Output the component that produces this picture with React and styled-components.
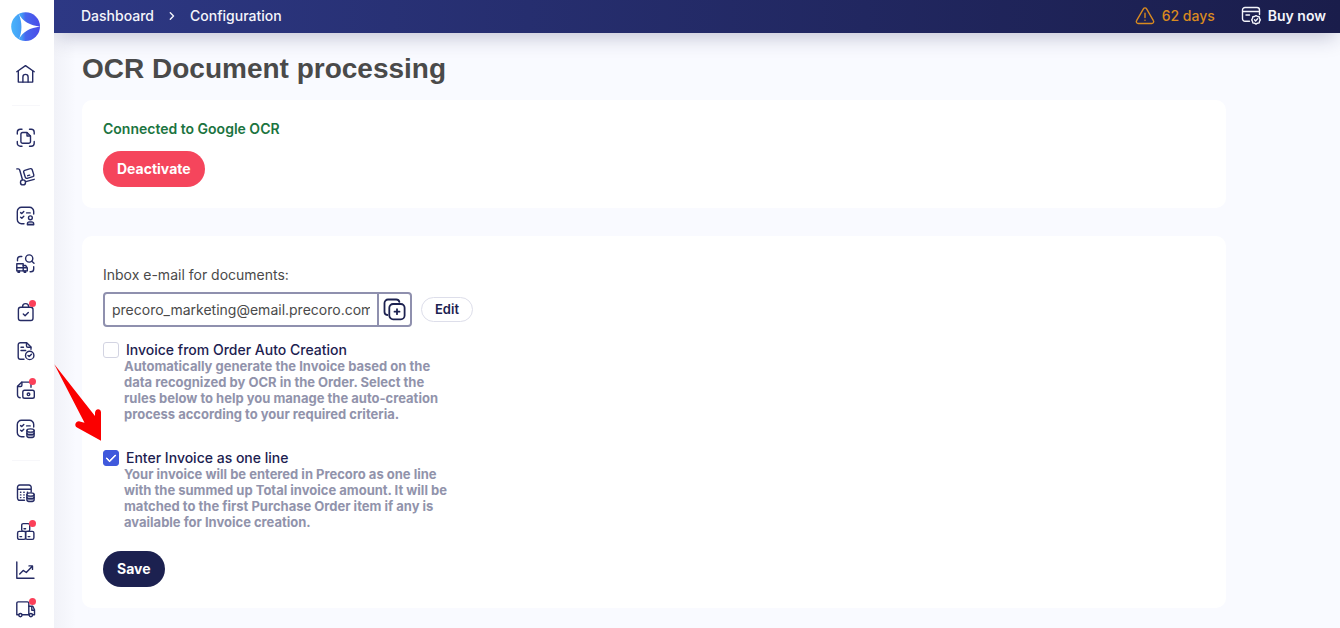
import { useState } from "react";
import styled, { createGlobalStyle } from "styled-components";

const GlobalStyle = createGlobalStyle`
  * {
    box-sizing: border-box;
  }
  body {
    margin: 0;
    background: #f9faff;
    font-family: Inter, "Liberation Sans", sans-serif;
    color: #1c2150;
  }
  button,
  input {
    font-family: inherit;
  }
`;

const Icon = ({ children, size = 20 }) => (
  <svg
    width={size}
    height={size}
    viewBox={`0 0 ${size} ${size}`}
    fill="none"
    stroke="currentColor"
    strokeWidth="1.4"
    strokeLinecap="round"
    strokeLinejoin="round"
    aria-hidden="true"
  >
    {children}
  </svg>
);

const Logo = () => (
  <svg width="30" height="30" viewBox="0 0 30 30" aria-hidden="true">
    <defs>
      <linearGradient id="logo" x1="0" y1="0" x2="1" y2="0">
        <stop offset="0" stopColor="#49b4fb" />
        <stop offset="0.35" stopColor="#439df6" />
        <stop offset="0.5" stopColor="#4767ee" />
        <stop offset="1" stopColor="#4a4be8" />
      </linearGradient>
    </defs>
    <circle cx="14.6" cy="14.6" r="14.4" fill="url(#logo)" />
    <path d="M7.6 1.4C12 10 19 13 29.2 14.6C19 16 12 19.5 7.6 27.8C11.4 20 11.4 10 7.6 1.4Z" fill="#fff" />
  </svg>
);

const HomeIcon = () => (
  <Icon>
    <path d="M.8 7.7 9.5 1.6l8.7 6.1" />
    <path d="M2.3 7.2v10.9h14.4V7.2" />
    <path d="M6.9 18v-5a2.6 2.6 0 0 1 5.2 0v5" />
  </Icon>
);

const ScanIcon = () => (
  <Icon>
    <path d="M1.3 6V4.3a3 3 0 0 1 3-3H6M13.5 1.3h1.7a3 3 0 0 1 3 3V6M18.2 13.5v1.7a3 3 0 0 1-3 3h-1.7M6 18.2H4.3a3 3 0 0 1-3-3v-1.7" />
    <path d="M11 4.5H6.7a1.8 1.8 0 0 0-1.8 1.8v7.2a1.8 1.8 0 0 0 1.8 1.8h6a1.8 1.8 0 0 0 1.8-1.8V8L11 4.5Z" />
    <path d="M11 4.7V8h3.3" />
  </Icon>
);

const TrolleyIcon = () => (
  <Icon>
    <path d="M.8 1.9h1.5a1.5 1.5 0 0 1 1.4 1.1l2.8 9.7" />
    <circle cx="7" cy="15.4" r="2.5" />
    <path d="m9.8 14.7 8.4-2.4" />
    <path d="m8.7 3.3 5.6-1.6a1.5 1.5 0 0 1 1.9 1l1.6 5.2a1.5 1.5 0 0 1-1 1.8l-5.6 1.6a1.5 1.5 0 0 1-1.9-1L7.7 5.2a1.5 1.5 0 0 1 1-1.9Z" />
    <path d="m11.7 8.7 2-.6" />
  </Icon>
);

const TaskFrame = () => (
  <>
    <path d="M8 17.7H5.5a4.2 4.2 0 0 1-4.2-4.2v-8a4.2 4.2 0 0 1 4.2-4.2h8a4.2 4.2 0 0 1 4.2 4.2V8" />
    <path d="m4.6 6.6 1.2 1 2-2M4.6 11.3l1.2 1 2-2M10.6 6.9h3.6" />
  </>
);

const TaskUserIcon = () => (
  <Icon>
    <TaskFrame />
    <circle cx="14.4" cy="11.8" r="1.9" />
    <path d="M11.4 18.7v-.8a2 2 0 0 1 2-2h2.3a2 2 0 0 1 2 2v.8Z" fill="#b9bbd0" />
  </Icon>
);

const Stack = () => (
  <g>
    <path d="M10.9 11.5v5.4c0 1 1.6 1.7 3.6 1.7s3.6-.7 3.6-1.7v-5.4" fill="#b9bbd0" />
    <ellipse cx="14.5" cy="11.5" rx="3.6" ry="1.6" fill="#fff" />
    <path d="M10.9 14.2c0 1 1.6 1.6 3.6 1.6s3.6-.6 3.6-1.6" />
  </g>
);

const TaskStackIcon = () => (
  <Icon>
    <TaskFrame />
    <Stack />
  </Icon>
);

const TruckSearchIcon = () => (
  <Icon>
    <circle cx="13.2" cy="4.5" r="3.6" />
    <path d="m15.8 7.2 2.2 2" />
    <path d="M1.5 6.7V5.3a2.8 2.8 0 0 1 2.8-2.8h1.5" />
    <path d="M17.7 12.7v2.2a2.8 2.8 0 0 1-2.8 2.8h-.8" />
    <path d="M.8 16.9V9.8h6.4v7.1Z" />
    <path d="M7.2 11.5h2.4l1.7 2.3v3.1H7.2M.8 13.8h10.4" />
    <path d="M2 17v1.2h1.5V17M8.2 17v1.2h1.5V17" />
  </Icon>
);

const BagIcon = () => (
  <Icon>
    <rect x="2.4" y="5.2" width="14.6" height="13.3" rx="2.2" />
    <path d="M6.6 5.2v-.6a3 3 0 0 1 6 0v.6" />
    <path d="m7.3 12 1.8 1.7 3.2-3.3" />
  </Icon>
);

const DocCheckIcon = () => (
  <Icon>
    <path d="M8 18.2H4.4a2.2 2.2 0 0 1-2.2-2.2V3.9a2.2 2.2 0 0 1 2.2-2.2h6.3l4.3 4.2v2.3" />
    <path d="M10.5 2v3a1.3 1.3 0 0 0 1.3 1.3h3" />
    <path d="M5 6.3h2.5M5 9.5h4.7" />
    <circle cx="13.7" cy="14.4" r="4.2" />
    <path d="m12 14.4 1.2 1.2 2.3-2.3" />
  </Icon>
);

const DocMoneyIcon = () => (
  <Icon>
    <path d="M4.2 17.7a2.7 2.7 0 0 1-2.7-2.7V6.3l4.4-4.2h6.9a2.2 2.2 0 0 1 2.2 2.2v3" />
    <path d="M5.9 2.3v2.9a1.3 1.3 0 0 1-1.3 1.3H1.7" />
    <rect x="6.8" y="10.3" width="11.5" height="8" rx="1.8" />
    <circle cx="12.5" cy="14.3" r="1.3" />
  </Icon>
);

const CalculatorIcon = () => (
  <Icon>
    <path d="M8.5 17.3H3.7a2.2 2.2 0 0 1-2.2-2.2V4.2A2.2 2.2 0 0 1 3.7 2h9.3a2.2 2.2 0 0 1 2.2 2.2V9M1.5 6.3h13.7" />
    <path d="M4.5 9.2h.4M7.8 9.2h.4M11.3 9.2h.4M4.5 11.9h.4M7.8 11.9h.4M4.5 14.6h.4M7.8 14.6h.4" />
    <Stack />
  </Icon>
);

const BoxesIcon = () => (
  <Icon>
    <rect x="5.7" y="1.6" width="8" height="7.8" rx="1.6" />
    <rect x="1.6" y="9.4" width="8" height="8" rx="1.6" />
    <rect x="9.6" y="9.4" width="8.3" height="8" rx="1.6" />
    <path d="M8 6.8h1.6M4 14.6h1.6M12.2 14.6h1.6" />
  </Icon>
);

const ChartIcon = () => (
  <Icon>
    <path d="M.8 1v16.2h17.2" />
    <path d="m3.7 12.9 3.5-3.5 3.1 2.1 6-6.3M13 4.9h3.5v3.5" />
  </Icon>
);

const TruckIcon = () => (
  <Icon>
    <path d="M2.6 14.8H.8V3.2a1.3 1.3 0 0 1 1.3-1.3h9.4a1.3 1.3 0 0 1 1.3 1.3v11.6H6.2" />
    <path d="M12.8 6.3h4l1.7 3.4v5.1h-1.8M12.8 14.8h.4" />
    <path d="M18.3 10.3h-2.5V6.6" />
    <circle cx="4.4" cy="15.1" r="1.6" />
    <circle cx="14.9" cy="15.1" r="1.6" />
  </Icon>
);

const WarningIcon = () => (
  <Icon>
    <path d="M8.4 2.8 1.6 14.6a1.9 1.9 0 0 0 1.6 2.9h13.6a1.9 1.9 0 0 0 1.6-2.9L11.6 2.8a1.9 1.9 0 0 0-3.2 0Z" />
    <path d="M10 7.2v4.3M10 14.1v.2" />
  </Icon>
);

const CardIcon = () => (
  <Icon>
    <path d="M8.5 15.3H4A2.5 2.5 0 0 1 1.5 12.8V4A2.5 2.5 0 0 1 4 1.5h12A2.5 2.5 0 0 1 18.5 4v4.5M1.5 5.5h17M5 9h3.5" />
    <path d="m15 9.6 1.5.9 1.7.3.3 1.6.8 1.4-.8 1.5-.3 1.6-1.7.3-1.5.9-1.5-.9-1.7-.3-.3-1.6-.8-1.5.8-1.4.3-1.6 1.7-.3Z" />
    <path d="m13.5 13.8 1.1 1.1 2-2.1" />
  </Icon>
);

const ChevronIcon = () => (
  <Icon size={8}>
    <path d="m2.3.8 3.2 3.2-3.2 3.2" />
  </Icon>
);

const CopyIcon = () => (
  <svg
    width="24"
    height="24"
    viewBox="0 0 24 24"
    fill="none"
    stroke="currentColor"
    strokeWidth="1.8"
    strokeLinecap="round"
    strokeLinejoin="round"
    aria-hidden="true"
  >
    <path d="M4.3 17A3 3 0 0 1 1.5 14V5A3.5 3.5 0 0 1 5 1.5h8.3a3.2 3.2 0 0 1 3.1 2.4" />
    <rect x="6.3" y="6" width="15.3" height="15.3" rx="3.8" />
    <path d="M14 11.2v5M11.5 13.7h5" />
  </svg>
);

const menu = [
  [
    { name: "Document scan", icon: ScanIcon },
    { name: "Purchasing", icon: TrolleyIcon },
    { name: "Requests", icon: TaskUserIcon },
  ],
  [{ name: "Suppliers", icon: TruckSearchIcon }],
  [
    { name: "Orders", icon: BagIcon, alert: true },
    { name: "Receipts", icon: DocCheckIcon },
    { name: "Invoices", icon: DocMoneyIcon, alert: true },
    { name: "Expenses", icon: TaskStackIcon },
  ],
];

const tools = [
  { name: "Budgets", icon: CalculatorIcon },
  { name: "Inventory", icon: BoxesIcon, alert: true },
  { name: "Reports", icon: ChartIcon },
  { name: "Delivery", icon: TruckIcon, alert: true },
];

const MenuItem = ({ item }) => (
  <MenuLink href="#" aria-label={item.name}>
    <item.icon />
    {item.alert && <Dot />}
  </MenuLink>
);

const Option = ({ id, title, checked, onChange, children }) => (
  <OptionBox>
    <OptionHead>
      <Checkbox id={id} type="checkbox" checked={checked} onChange={onChange} />
      <OptionLabel htmlFor={id}>{title}</OptionLabel>
    </OptionHead>
    <Description>{children}</Description>
    {checked && (
      <Pointer width="48" height="78" viewBox="0 0 48 78" aria-hidden="true">
        <path
          d="M.3.3 41 52V49c0-5 6-5 6-.5V76.7L23 63.6c-3.5-2-1-7.2 2.7-6.2l4.8 1.3Z"
          fill="#fb0000"
        />
      </Pointer>
    )}
  </OptionBox>
);

export default function App() {
  const [email, setEmail] = useState("precoro_marketing@email.precoro.com");
  const [auto, setAuto] = useState(false);
  const [oneLine, setOneLine] = useState(true);

  return (
    <Page>
      <GlobalStyle />
      <Sidebar>
        <LogoLink href="#" aria-label="Home page">
          <Logo />
        </LogoLink>
        <MenuItem item={{ name: "Home", icon: HomeIcon }} />
        <Divider />
        <Menu>
          {menu.map((group) => (
            <MenuGroup key={group[0].name}>
              {group.map((item) => (
                <MenuItem key={item.name} item={item} />
              ))}
            </MenuGroup>
          ))}
        </Menu>
        <Divider />
        <MenuGroup>
          {tools.map((item) => (
            <MenuItem key={item.name} item={item} />
          ))}
        </MenuGroup>
      </Sidebar>

      <Main>
        <Header>
          <Breadcrumbs>
            <HeaderLink href="#">Dashboard</HeaderLink>
            <ChevronIcon />
            <HeaderLink href="#">Configuration</HeaderLink>
          </Breadcrumbs>
          <HeaderActions>
            <Trial>
              <WarningIcon />
              62 days
            </Trial>
            <BuyLink href="#">
              <CardIcon />
              Buy now
            </BuyLink>
          </HeaderActions>
        </Header>

        <Content>
          <Title>OCR Document processing</Title>
          <Card>
            <Status>Connected to Google OCR</Status>
            <Button $color="#f5455c">Deactivate</Button>
          </Card>
          <Card>
            <FieldLabel htmlFor="inbox">Inbox e-mail for documents:</FieldLabel>
            <FieldRow>
              <InputGroup>
                <Input id="inbox" value={email} onChange={(e) => setEmail(e.target.value)} />
                <CopyButton aria-label="Copy e-mail">
                  <CopyIcon />
                </CopyButton>
              </InputGroup>
              <EditButton>Edit</EditButton>
            </FieldRow>
            <Options>
              <Option
                id="auto"
                title="Invoice from Order Auto Creation"
                checked={auto}
                onChange={() => setAuto(!auto)}
              >
                Automatically generate the Invoice based on the data recognized by OCR in the Order.
                Select the rules below to help you manage the auto-creation process according to
                your required criteria.
              </Option>
              <Option
                id="one-line"
                title="Enter Invoice as one line"
                checked={oneLine}
                onChange={() => setOneLine(!oneLine)}
              >
                Your invoice will be entered in Precoro as one line with the summed up Total invoice
                amount. It will be matched to the first Purchase Order item if any is available for
                Invoice creation.
              </Option>
            </Options>
            <Button $color="#1c2150">Save</Button>
          </Card>
        </Content>
      </Main>
    </Page>
  );
}

const Page = styled.div`
  display: flex;
  height: 100vh;
  overflow: hidden;
`;

const Sidebar = styled.nav`
  flex: 0 0 54px;
  display: flex;
  flex-direction: column;
  align-items: center;
  padding-right: 2px;
  overflow: hidden;
  background: #fff;
`;

const LogoLink = styled.a`
  display: flex;
  padding: 12px 0;
`;

const Menu = styled.div`
  display: flex;
  flex-direction: column;
  gap: 9px;
`;

const MenuGroup = styled.div`
  display: flex;
  flex-direction: column;
`;

const MenuLink = styled.a`
  position: relative;
  display: flex;
  padding: 10px 0 9px;
  color: #252b64;
`;

const Dot = styled.span`
  position: absolute;
  top: 8px;
  right: 0;
  width: 7px;
  height: 7px;
  border-radius: 50%;
  background: #fb4059;
`;

const Divider = styled.div`
  flex: none;
  width: 28px;
  height: 1px;
  margin: 12px 0;
  background: #f7f7fa;
`;

const Main = styled.div`
  flex: 1;
  min-width: 0;
  overflow: auto;
  background: linear-gradient(90deg, #f1f2f8, #f9faff 22px);
`;

const Header = styled.header`
  display: flex;
  align-items: center;
  justify-content: space-between;
  height: 33px;
  padding: 0 14px 2px 27px;
  background: linear-gradient(90deg, #2d3884, #1a1d4b);
  box-shadow: 0 8px 20px -4px rgba(28, 33, 80, 0.25);
  color: #f4f5fb;
  font-size: 14px;
  font-weight: 500;
  line-height: 20px;
`;

const Breadcrumbs = styled.div`
  display: flex;
  align-items: center;
  gap: 14px;
`;

const HeaderLink = styled.a`
  color: inherit;
  text-decoration: none;
`;

const HeaderActions = styled.div`
  display: flex;
  align-items: center;
  gap: 26px;
`;

const Trial = styled.span`
  display: flex;
  align-items: center;
  gap: 7px;
  color: #d98a1f;
`;

const BuyLink = styled(HeaderLink)`
  display: flex;
  align-items: center;
  gap: 7px;
  font-weight: 600;
`;

const Content = styled.main`
  display: flex;
  flex-direction: column;
  gap: 28px;
  max-width: 1200px;
  padding: 20px 28px;
`;

const Title = styled.h1`
  margin: 0 0 -13px;
  color: #4a4a4a;
  font-family: "Liberation Sans", Arial, sans-serif;
  font-size: 28px;
  font-weight: 700;
  line-height: 32px;
`;

const Card = styled.section`
  padding: 21px;
  border-radius: 10px;
  background: #fff;
`;

const Status = styled.p`
  margin: 0 0 14px;
  color: #1b7440;
  font-size: 14px;
  font-weight: 600;
  line-height: 16px;
`;

const Button = styled.button`
  height: 36px;
  padding: 0 14px 1px;
  border: 0;
  border-radius: 18px;
  background: ${(props) => props.$color};
  color: #fff;
  font-size: 14px;
  font-weight: 700;
`;

const FieldLabel = styled.label`
  display: block;
  margin: 8px 0 7px;
  color: #4a4a4a;
  font-size: 14px;
  line-height: 20px;
`;

const FieldRow = styled.div`
  display: flex;
  align-items: center;
  gap: 9px;
`;

const InputGroup = styled.div`
  display: flex;
  width: 309px;
  height: 35px;
  border: 2px solid #8f90ae;
  border-radius: 4px;
`;

const Input = styled.input`
  flex: 1;
  min-width: 0;
  padding: 0 7px;
  border: 0;
  outline: 0;
  background: none;
  color: #4a4a4a;
  font-size: 14px;
`;

const CopyButton = styled.button`
  display: flex;
  align-items: center;
  justify-content: center;
  width: 33px;
  padding: 0;
  border: 0;
  border-left: 2px solid #8f90ae;
  background: none;
  color: #1c2150;
`;

const EditButton = styled.button`
  height: 25px;
  padding: 0 13px 1px;
  border: 1px solid #dddeea;
  border-radius: 13px;
  background: #fff;
  color: #1c2150;
  font-size: 13px;
  font-weight: 600;
`;

const Options = styled.div`
  display: flex;
  flex-direction: column;
  gap: 28px;
  margin: 15px 0 21px;
`;

const OptionBox = styled.div`
  position: relative;
`;

const OptionHead = styled.div`
  display: flex;
  align-items: center;
  gap: 7px;
`;

const Checkbox = styled.input`
  appearance: none;
  display: flex;
  align-items: center;
  justify-content: center;
  width: 16px;
  height: 16px;
  margin: 0;
  border: 1px solid #d3d4e2;
  border-radius: 3px;
  background: #fff;

  &:checked {
    border-color: #4059dc;
    background: #4059dc;
  }
  &:checked::after {
    content: "";
    width: 8px;
    height: 4px;
    margin-bottom: 2px;
    border: solid #fff;
    border-width: 0 0 2px 2px;
    border-radius: 1px;
    transform: rotate(-45deg);
  }
`;

const OptionLabel = styled.label`
  font-size: 14px;
  font-weight: 500;
  line-height: 16px;
`;

const Description = styled.p`
  max-width: 352px;
  margin: 0;
  padding-left: 21px;
  color: #9193ab;
  font-size: 13px;
  font-weight: 700;
  line-height: 16px;
`;

/* arrow that points at the chosen option */
const Pointer = styled.svg`
  position: absolute;
  top: -86px;
  left: -49px;
  pointer-events: none;
`;
